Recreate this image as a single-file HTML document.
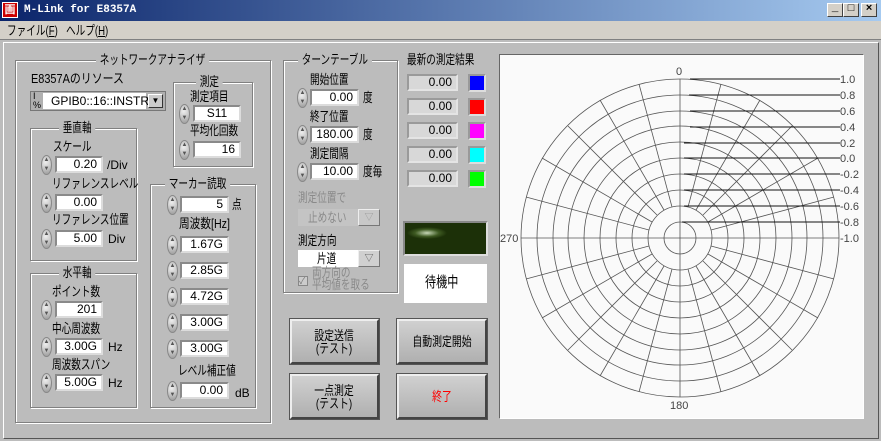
<!DOCTYPE html>
<html><head><meta charset="utf-8"><style>
*{box-sizing:border-box;margin:0;padding:0}
body{width:881px;height:441px;overflow:hidden;background:#bcbcbc;font-family:"Liberation Sans","Noto Sans CJK JP",sans-serif;font-size:12px;color:#000;position:relative}
.a{position:absolute}
.j,.lbl,.gt{font-size:13px;line-height:15px;transform:scaleX(.74);transform-origin:0 0;white-space:nowrap}
.title{left:0;top:0;width:881px;height:21px;background:linear-gradient(90deg,#0a246a,#a6caf0);color:#fff;font-weight:bold;font-size:11px;font-family:"Liberation Mono","Noto Sans CJK JP",monospace}
.menu{left:0;top:21px;width:881px;height:19px;background:#d4d0c8;border-bottom:1px solid #808080}
.tb{top:3px;width:16px;height:14px;background:#d4d0c8;border:1px solid;border-color:#fff #404040 #404040 #fff;font-size:11px;text-align:center;line-height:11px;color:#000}
.grp{border:1px solid #808080;box-shadow:1px 1px 0 #fff inset,1px 1px 0 #fff}
.gt{background:#bcbcbc;padding:0 5px}
.fld{height:17px;background:#fff;border:2px solid;border-color:#8a8a8a #dcdcdc #dcdcdc #8a8a8a;text-align:right;padding-right:4px;line-height:13px}
.sp{width:11px;height:20px;border-radius:50%;background:radial-gradient(circle at 40% 35%,#eee,#999);border:1px solid #888;font-size:6px;line-height:9px;text-align:center;color:#555}
.btn{background:linear-gradient(#d0d0d0,#b0b0b0);border:2px solid;border-color:#eee #444 #444 #eee;box-shadow:0 0 0 1px #555;text-align:center;display:flex;align-items:center;justify-content:center;line-height:13px;font-size:13px}
.btn span{display:inline-block;transform:scaleX(.76);white-space:nowrap}
.res{width:51px;height:17px;background:#d8d8d8;border:2px solid;border-color:#9a9a9a #e4e4e4 #e4e4e4 #9a9a9a;text-align:right;padding-right:4px;line-height:13px}
.sw{width:18px;height:18px;border:2px solid;border-color:#999 #ddd #ddd #999}
</style></head><body>
<div class="a title"><div class="a" style="left:2px;top:2px;width:16px;height:16px;background:#c00;color:#fff;font-size:11px;text-align:center;line-height:16px;border:1px solid #fff">画</div><span class="a" style="left:24px;top:4px">M-Link for E8357A</span>
<div class="a tb" style="left:827px">_</div><div class="a tb" style="left:843px">□</div><div class="a tb" style="left:861px;font-weight:bold">×</div></div>
<div class="a menu"><span class="a j" style="left:7px;top:2px">ファイル(<u>F</u>)</span><span class="a j" style="left:66px;top:2px">ヘルプ(<u>H</u>)</span></div>
<div class="a" style="left:3px;top:42px;width:876px;height:397px;border:1px solid;border-color:#fff #555 #555 #fff"></div>

<div class="a grp" style="left:15px;top:60px;width:256px;height:363px"></div>
<div class="a gt" style="left:96px;top:52px">ネットワークアナライザ</div>
<div class="a lbl" style="left:31px;top:71px;transform:scaleX(.84)">E8357Aのリソース</div>
<div class="a" style="left:30px;top:91px;width:136px;height:20px;background:#b0b0b0;border:1px solid #777"></div>
<div class="a" style="left:33px;top:92px;font-size:9px;line-height:9px">I<br>%</div>
<div class="a" style="left:43px;top:93px;width:103px;height:16px;background:#fff;padding-left:8px;line-height:16px">GPIB0::16::INSTR</div>
<div class="a" style="left:148px;top:94px;width:15px;height:14px;background:#ccc;border:1px solid;border-color:#fff #333 #333 #fff;font-size:8px;text-align:center;line-height:12px">▼</div>

<div class="a grp" style="left:173px;top:82px;width:80px;height:85px"></div>
<div class="a gt" style="left:196px;top:74px">測定</div>
<div class="a lbl" style="left:190px;top:89px">測定項目</div>
<div class="a sp" style="left:179px;top:104px">▲<br>▼</div>
<div class="a fld" style="left:193px;top:105px;width:48px;text-align:center;padding:0">S11</div>
<div class="a lbl" style="left:190px;top:123px">平均化回数</div>
<div class="a sp" style="left:179px;top:140px">▲<br>▼</div>
<div class="a fld" style="left:193px;top:141px;width:48px">16</div>

<div class="a grp" style="left:30px;top:128px;width:107px;height:133px"></div>
<div class="a gt" style="left:59px;top:120px">垂直軸</div>
<div class="a lbl" style="left:53px;top:139px">スケール</div>
<div class="a sp" style="left:41px;top:155px">▲<br>▼</div>
<div class="a fld" style="left:55px;top:156px;width:48px">0.20</div><div class="a" style="left:107px;top:158px">/Div</div>
<div class="a lbl" style="left:52px;top:176px">リファレンスレベル</div>
<div class="a sp" style="left:41px;top:193px">▲<br>▼</div>
<div class="a fld" style="left:55px;top:194px;width:48px">0.00</div>
<div class="a lbl" style="left:52px;top:212px">リファレンス位置</div>
<div class="a sp" style="left:41px;top:229px">▲<br>▼</div>
<div class="a fld" style="left:55px;top:230px;width:48px">5.00</div><div class="a" style="left:108px;top:232px">Div</div>

<div class="a grp" style="left:30px;top:273px;width:107px;height:135px"></div>
<div class="a gt" style="left:59px;top:265px">水平軸</div>
<div class="a lbl" style="left:52px;top:284px">ポイント数</div>
<div class="a sp" style="left:41px;top:300px">▲<br>▼</div>
<div class="a fld" style="left:55px;top:301px;width:48px">201</div>
<div class="a lbl" style="left:52px;top:321px">中心周波数</div>
<div class="a sp" style="left:41px;top:337px">▲<br>▼</div>
<div class="a fld" style="left:55px;top:338px;width:48px">3.00G</div><div class="a" style="left:108px;top:340px">Hz</div>
<div class="a lbl" style="left:52px;top:357px">周波数スパン</div>
<div class="a sp" style="left:41px;top:373px">▲<br>▼</div>
<div class="a fld" style="left:55px;top:374px;width:48px">5.00G</div><div class="a" style="left:108px;top:376px">Hz</div>

<div class="a grp" style="left:150px;top:184px;width:106px;height:224px"></div>
<div class="a gt" style="left:165px;top:176px">マーカー読取</div>
<div class="a sp" style="left:167px;top:195px">▲<br>▼</div>
<div class="a fld" style="left:180px;top:196px;width:49px">5</div><div class="a j" style="left:232px;top:197px">点</div>
<div class="a lbl" style="left:179px;top:216px;transform:scaleX(.82)">周波数[Hz]</div>
<div class="a sp" style="left:167px;top:235px">▲<br>▼</div><div class="a fld" style="left:180px;top:236px;width:49px">1.67G</div>
<div class="a sp" style="left:167px;top:261px">▲<br>▼</div><div class="a fld" style="left:180px;top:262px;width:49px">2.85G</div>
<div class="a sp" style="left:167px;top:287px">▲<br>▼</div><div class="a fld" style="left:180px;top:288px;width:49px">4.72G</div>
<div class="a sp" style="left:167px;top:313px">▲<br>▼</div><div class="a fld" style="left:180px;top:314px;width:49px">3.00G</div>
<div class="a sp" style="left:167px;top:339px">▲<br>▼</div><div class="a fld" style="left:180px;top:340px;width:49px">3.00G</div>
<div class="a lbl" style="left:178px;top:363px">レベル補正値</div>
<div class="a sp" style="left:167px;top:381px">▲<br>▼</div><div class="a fld" style="left:180px;top:382px;width:49px">0.00</div><div class="a" style="left:235px;top:386px">dB</div>

<div class="a grp" style="left:283px;top:60px;width:115px;height:233px"></div>
<div class="a gt" style="left:298px;top:52px">ターンテーブル</div>
<div class="a lbl" style="left:310px;top:72px">開始位置</div>
<div class="a sp" style="left:297px;top:88px">▲<br>▼</div><div class="a fld" style="left:310px;top:89px;width:49px">0.00</div><div class="a j" style="left:363px;top:90px">度</div>
<div class="a lbl" style="left:310px;top:109px">終了位置</div>
<div class="a sp" style="left:297px;top:125px">▲<br>▼</div><div class="a fld" style="left:310px;top:126px;width:49px">180.00</div><div class="a j" style="left:363px;top:127px">度</div>
<div class="a lbl" style="left:310px;top:146px">測定間隔</div>
<div class="a sp" style="left:297px;top:162px">▲<br>▼</div><div class="a fld" style="left:310px;top:163px;width:49px">10.00</div><div class="a j" style="left:363px;top:164px">度毎</div>
<div class="a lbl" style="left:298px;top:190px;color:#8a8a8a">測定位置で</div>
<div class="a" style="left:298px;top:209px;width:60px;height:17px;background:#c4c4c4"></div>
<div class="a j" style="left:308px;top:210px;color:#8a8a8a">止めない</div>
<div class="a" style="left:358px;top:209px;width:22px;height:17px;background:#c8c8c8;border:1px solid;border-color:#eee #777 #777 #eee;font-size:9px;color:#999;text-align:center;line-height:15px">▽</div>
<div class="a lbl" style="left:298px;top:233px">測定方向</div>
<div class="a" style="left:298px;top:250px;width:60px;height:17px;background:#fff"></div>
<div class="a j" style="left:317px;top:251px">片道</div>
<div class="a" style="left:358px;top:250px;width:22px;height:17px;background:#d0d0d0;border:1px solid;border-color:#eee #777 #777 #eee;font-size:9px;color:#555;text-align:center;line-height:15px">▽</div>
<div class="a" style="left:298px;top:276px;width:10px;height:10px;border:1px solid #888;background:#ccc;font-size:9px;line-height:8px;color:#777">✓</div>
<div class="a j" style="left:312px;top:267px;color:#8a8a8a;line-height:12px">両方向の<br>平均値を取る</div>

<div class="a lbl" style="left:407px;top:52px">最新の測定結果</div>
<div class="a res" style="left:407px;top:74px">0.00</div><div class="a sw" style="left:468px;top:74px;background:#0000ff"></div>
<div class="a res" style="left:407px;top:98px">0.00</div><div class="a sw" style="left:468px;top:98px;background:#ff0000"></div>
<div class="a res" style="left:407px;top:122px">0.00</div><div class="a sw" style="left:468px;top:122px;background:#ff00ff"></div>
<div class="a res" style="left:407px;top:146px">0.00</div><div class="a sw" style="left:468px;top:146px;background:#00ffff"></div>
<div class="a res" style="left:407px;top:170px">0.00</div><div class="a sw" style="left:468px;top:170px;background:#00ff00"></div>
<div class="a" style="left:403px;top:221px;width:85px;height:35px;border:2px solid;border-color:#888 #ddd #ddd #888;background:radial-gradient(ellipse 20px 6px at 22px 10px,#c8d8b8,#3e5a22 60%,#1c3008 100%)"></div>
<div class="a" style="left:404px;top:264px;width:83px;height:39px;background:#fff"></div>
<div class="a j" style="left:425px;top:274px;font-size:15px;line-height:17px">待機中</div>

<div class="a btn" style="left:290px;top:319px;width:89px;height:45px"><span>設定送信<br>(テスト)</span></div>
<div class="a btn" style="left:397px;top:319px;width:90px;height:45px"><span>自動測定開始</span></div>
<div class="a btn" style="left:290px;top:374px;width:89px;height:45px"><span>一点測定<br>(テスト)</span></div>
<div class="a btn" style="left:397px;top:374px;width:90px;height:45px;color:#f00"><span>終了</span></div>

<div class="a" style="left:499px;top:54px;width:365px;height:365px;background:#fafafa;border:1px solid;border-color:#666 #fff #fff #666"></div>
<svg class="a" style="left:0;top:0" width="881" height="441" font-family="Liberation Sans,sans-serif" font-size="11" fill="#444">
<g stroke="#555" stroke-width="0.8" fill="none">
<circle cx="680" cy="238" r="16"/><circle cx="680" cy="238" r="32"/><circle cx="680" cy="238" r="48"/><circle cx="680" cy="238" r="64"/><circle cx="680" cy="238" r="80"/><circle cx="680" cy="238" r="96"/><circle cx="680" cy="238" r="112"/><circle cx="680" cy="238" r="127"/><circle cx="680" cy="238" r="143"/><circle cx="680" cy="238" r="159"/>
<line x1="680" y1="79" x2="680" y2="397"/><line x1="521" y1="238" x2="839" y2="238"/>
<g id="sp">
<line x1="688" y1="207" x2="721" y2="84"/><line x1="696" y1="210" x2="760" y2="100"/><line x1="703" y1="215" x2="792" y2="126"/><line x1="708" y1="222" x2="818" y2="158"/><line x1="711" y1="230" x2="834" y2="197"/>
</g>
<use href="#sp" transform="matrix(-1 0 0 1 1360 0)"/><use href="#sp" transform="matrix(1 0 0 -1 0 476)"/><use href="#sp" transform="matrix(-1 0 0 -1 1360 476)"/>
</g>
<g stroke="#111" stroke-width="1">
<line x1="690" y1="79" x2="840" y2="79"/><line x1="689" y1="95" x2="840" y2="95"/><line x1="690" y1="111" x2="840" y2="111"/><line x1="690" y1="127" x2="840" y2="127"/><line x1="684" y1="143" x2="840" y2="143"/><line x1="684" y1="158" x2="840" y2="158"/><line x1="684" y1="174" x2="840" y2="174"/><line x1="684" y1="190" x2="840" y2="190"/><line x1="684" y1="206" x2="840" y2="206"/><line x1="682" y1="222" x2="840" y2="222"/>
</g>
<text x="840" y="83">1.0</text><text x="840" y="99">0.8</text><text x="840" y="115">0.6</text><text x="840" y="131">0.4</text><text x="840" y="147">0.2</text><text x="840" y="162">0.0</text><text x="840" y="178">-0.2</text><text x="840" y="194">-0.4</text><text x="840" y="210">-0.6</text><text x="840" y="226">-0.8</text><text x="840" y="242">-1.0</text>
<text x="676" y="75">0</text><text x="500" y="242">270</text><text x="670" y="409">180</text>
</svg>
</body></html>
